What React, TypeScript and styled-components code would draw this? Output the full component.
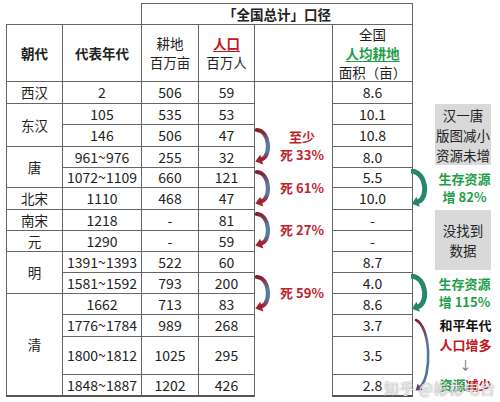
import React from "react";
import styled, { createGlobalStyle } from "styled-components";

const Global = createGlobalStyle`
  html, body { margin: 0; padding: 0; background: #ffffff; }
  body { font-family: "Noto Sans CJK SC", "Noto Sans", sans-serif; color: #222; }
`;

const Page = styled.div`
  position: relative;
  width: 500px;
  height: 402px;
  box-sizing: border-box;
  padding: 3px 0 0 6px;
  overflow: hidden;
`;

const Grid = styled.div`
  display: grid;
  grid-template-columns: 56px 79px 57px 56px 78px 80px 88px;
  grid-template-rows: 21px 57px 22px 21px 22px 21px 20px 22px 21px 21px 21px 21px 21px 22px 38px 22px;
`;

const Cell = styled.div<{
  $col: number;
  $row: number;
  $rowSpan?: number;
  $colSpan?: number;
  $bottom?: boolean;
  $bold?: boolean;
  $cjk?: boolean;
}>`
  grid-column: ${(p) => p.$col} / span ${(p) => p.$colSpan ?? 1};
  grid-row: ${(p) => p.$row} / span ${(p) => p.$rowSpan ?? 1};
  border: 1px solid #666;
  border-bottom: ${(p) => (p.$bottom ? "2px solid #555" : "1px solid #666")};
  margin: 0 -1px -1px 0;
  display: flex;
  flex-direction: column;
  align-items: center;
  justify-content: center;
  font-size: ${(p) => (p.$cjk ? 13.5 : 14)}px;
  line-height: 19px;
  font-weight: ${(p) => (p.$bold ? 700 : 400)};
  color: #222;
  white-space: nowrap;
`;

const Red = styled.span<{ $u?: boolean }>`
  color: #c4161c;
  font-weight: 700;
  text-decoration: ${(p) => (p.$u ? "underline" : "none")};
  text-underline-offset: 2px;
`;

const Green = styled.span<{ $u?: boolean }>`
  color: #1f9e4a;
  font-weight: 700;
  text-decoration: ${(p) => (p.$u ? "underline" : "none")};
  text-underline-offset: 2px;
`;

const Note = styled.div<{ $col: number; $row: number; $span: number }>`
  grid-column: ${(p) => p.$col};
  grid-row: ${(p) => p.$row} / span ${(p) => p.$span};
  display: flex;
  align-items: center;
  min-width: 0;
`;

const ArrowSlot = styled.div<{ $shift?: number }>`
  display: flex;
  flex: none;
  margin-left: ${(p) => p.$shift ?? 0}px;
`;

const NoteText = styled.div<{ $tone: "red" | "green" | "mixed" }>`
  flex: 1;
  text-align: center;
  font-size: 13px;
  line-height: 18px;
  font-weight: 700;
  color: ${(p) => (p.$tone === "red" ? "#c0242b" : p.$tone === "green" ? "#1f9e4a" : "#111")};
  white-space: nowrap;
`;

const TallText = styled(NoteText)`
  line-height: 20px;
`;

const DownMark = styled.div`
  font-weight: 400;
  color: #666;
  font-size: 12px;
`;

const GrayBox = styled.div<{ $row: number; $span: number }>`
  grid-column: 7;
  grid-row: ${(p) => p.$row} / span ${(p) => p.$span};
  margin: 1px 9px 2px 23px;
  background: #d9d9d9;
  display: flex;
  flex-direction: column;
  align-items: center;
  justify-content: center;
  font-size: 13.5px;
  line-height: 20px;
  color: #222;
  white-space: nowrap;
`;

const Watermark = styled.div`
  position: absolute;
  left: 384px;
  top: 377px;
  font-size: 15px;
  letter-spacing: 0.5px;
  color: rgba(255, 255, 255, 0.8);
  text-shadow: 0 0 1px rgba(60, 60, 60, 0.5), 0 0 2px rgba(60, 60, 60, 0.3);
  white-space: nowrap;
  pointer-events: none;
`;

const RedArrow = ({ id }: { id: string }) => (
  <svg width="17" height="38" viewBox="0 0 17 38">
    <defs>
      <linearGradient id={id} x1="0" y1="0" x2="0" y2="1">
        <stop offset="0" stopColor="#8a1a2c" />
        <stop offset="0.4" stopColor="#5a78a0" />
        <stop offset="0.75" stopColor="#5a78a0" />
        <stop offset="1" stopColor="#a3202f" />
      </linearGradient>
    </defs>
    <path d="M2 3 C 15 4, 16 29, 7 32" fill="none" stroke={`url(#${id})`} strokeWidth="4.2" strokeLinecap="round" />
    <polygon points="0.3,34.5 5.2,27.8 8.3,37.6" fill="#a3202f" />
  </svg>
);

const GreenArrow = () => (
  <svg width="18" height="38" viewBox="0 0 18 38">
    <path d="M1 2 C 16 4, 17 29, 7.5 32.5" fill="none" stroke="#25876b" strokeWidth="5" strokeLinecap="round" />
    <polygon points="0.8,34.8 5.5,27.8 8.8,37.8" fill="#25876b" />
  </svg>
);

const LongArrow = () => (
  <svg width="18" height="76" viewBox="0 0 18 76">
    <defs>
      <linearGradient id="longgrad" x1="0" y1="0" x2="0" y2="1">
        <stop offset="0" stopColor="#8a1a2c" />
        <stop offset="0.35" stopColor="#5a78a0" />
        <stop offset="1" stopColor="#4d6d96" />
      </linearGradient>
    </defs>
    <path d="M3 3 C 18 10, 19 60, 7 70" fill="none" stroke="url(#longgrad)" strokeWidth="2.6" strokeLinecap="round" />
    <polygon points="2.6,73.6 4.6,66.8 9.6,73" fill="#6a3f6a" />
  </svg>
);

type Row = { year: string; land: string; pop: string; per: string };

const rows: Row[] = [
  { year: "2", land: "506", pop: "59", per: "8.6" },
  { year: "105", land: "535", pop: "53", per: "10.1" },
  { year: "146", land: "506", pop: "47", per: "10.8" },
  { year: "961~976", land: "255", pop: "32", per: "8.0" },
  { year: "1072~1109", land: "660", pop: "121", per: "5.5" },
  { year: "1110", land: "468", pop: "47", per: "10.0" },
  { year: "1218", land: "-", pop: "81", per: "-" },
  { year: "1290", land: "-", pop: "59", per: "-" },
  { year: "1391~1393", land: "522", pop: "60", per: "8.7" },
  { year: "1581~1592", land: "793", pop: "200", per: "4.0" },
  { year: "1662", land: "713", pop: "83", per: "8.6" },
  { year: "1776~1784", land: "989", pop: "268", per: "3.7" },
  { year: "1800~1812", land: "1025", pop: "295", per: "3.5" },
  { year: "1848~1887", land: "1202", pop: "426", per: "2.8" },
];

const dynasties = [
  { name: "西汉", row: 3, span: 1 },
  { name: "东汉", row: 4, span: 2 },
  { name: "唐", row: 6, span: 2 },
  { name: "北宋", row: 8, span: 1 },
  { name: "南宋", row: 9, span: 1 },
  { name: "元", row: 10, span: 1 },
  { name: "明", row: 11, span: 2 },
  { name: "清", row: 13, span: 4 },
];

const deaths = [
  { row: 5, lines: ["至少", "死 33%"] },
  { row: 7, lines: ["死 61%"] },
  { row: 9, lines: ["死 27%"] },
  { row: 12, lines: ["死 59%"] },
];

export default function App() {
  return (
    <>
      <Global />
      <Page>
        <Grid>
          <Cell $col={3} $row={1} $colSpan={4} $bold $cjk>
            「全国总计」口径
          </Cell>

          <Cell $col={1} $row={2} $bold $cjk>
            朝代
          </Cell>
          <Cell $col={2} $row={2} $bold $cjk>
            代表年代
          </Cell>
          <Cell $col={3} $row={2} $cjk>
            <span>耕地</span>
            <span>百万亩</span>
          </Cell>
          <Cell $col={4} $row={2} $cjk>
            <Red $u>人口</Red>
            <span>百万人</span>
          </Cell>
          <Cell $col={5} $row={2} />
          <Cell $col={6} $row={2} $cjk>
            <span>全国</span>
            <Green $u>人均耕地</Green>
            <span>面积（亩）</span>
          </Cell>

          {dynasties.map((d) => (
            <Cell key={d.name} $col={1} $row={d.row} $rowSpan={d.span} $bottom={d.row + d.span === 17} $cjk>
              {d.name}
            </Cell>
          ))}

          {rows.map((r, i) => {
            const row = i + 3;
            const last = row === 16;
            return (
              <React.Fragment key={row}>
                <Cell $col={2} $row={row} $bottom={last}>
                  {r.year}
                </Cell>
                <Cell $col={3} $row={row} $bottom={last}>
                  {r.land}
                </Cell>
                <Cell $col={4} $row={row} $bottom={last}>
                  {r.pop}
                </Cell>
                <Cell $col={6} $row={row} $bottom={last}>
                  {r.per}
                </Cell>
              </React.Fragment>
            );
          })}

          {deaths.map((d) => (
            <Note key={d.row} $col={5} $row={d.row} $span={2}>
              <ArrowSlot $shift={1}>
                <RedArrow id={`rg${d.row}`} />
              </ArrowSlot>
              <NoteText $tone="red">
                {d.lines.map((l) => (
                  <div key={l}>{l}</div>
                ))}
              </NoteText>
            </Note>
          ))}

          <GrayBox $row={4} $span={3}>
            <span>汉一唐</span>
            <span>版图减小</span>
            <span>资源未增</span>
          </GrayBox>

          <Note $col={7} $row={7} $span={2}>
            <ArrowSlot $shift={-1}>
              <GreenArrow />
            </ArrowSlot>
            <NoteText $tone="green">
              <div>生存资源</div>
              <div>增 82%</div>
            </NoteText>
          </Note>

          <GrayBox $row={9} $span={3}>
            <span>没找到</span>
            <span>数据</span>
          </GrayBox>

          <Note $col={7} $row={12} $span={2}>
            <ArrowSlot $shift={-1}>
              <GreenArrow />
            </ArrowSlot>
            <NoteText $tone="green">
              <div>生存资源</div>
              <div>增 115%</div>
            </NoteText>
          </Note>

          <Note $col={7} $row={14} $span={3}>
            <ArrowSlot $shift={1}>
              <LongArrow />
            </ArrowSlot>
            <TallText $tone="mixed">
              <div>和平年代</div>
              <div>
                <Red>人口增多</Red>
              </div>
              <DownMark>↓</DownMark>
              <div>
                <Green>资源</Green>
                <Red>减少</Red>
              </div>
            </TallText>
          </Note>
        </Grid>
        <Watermark>知乎 @彬彬电台</Watermark>
      </Page>
    </>
  );
}
